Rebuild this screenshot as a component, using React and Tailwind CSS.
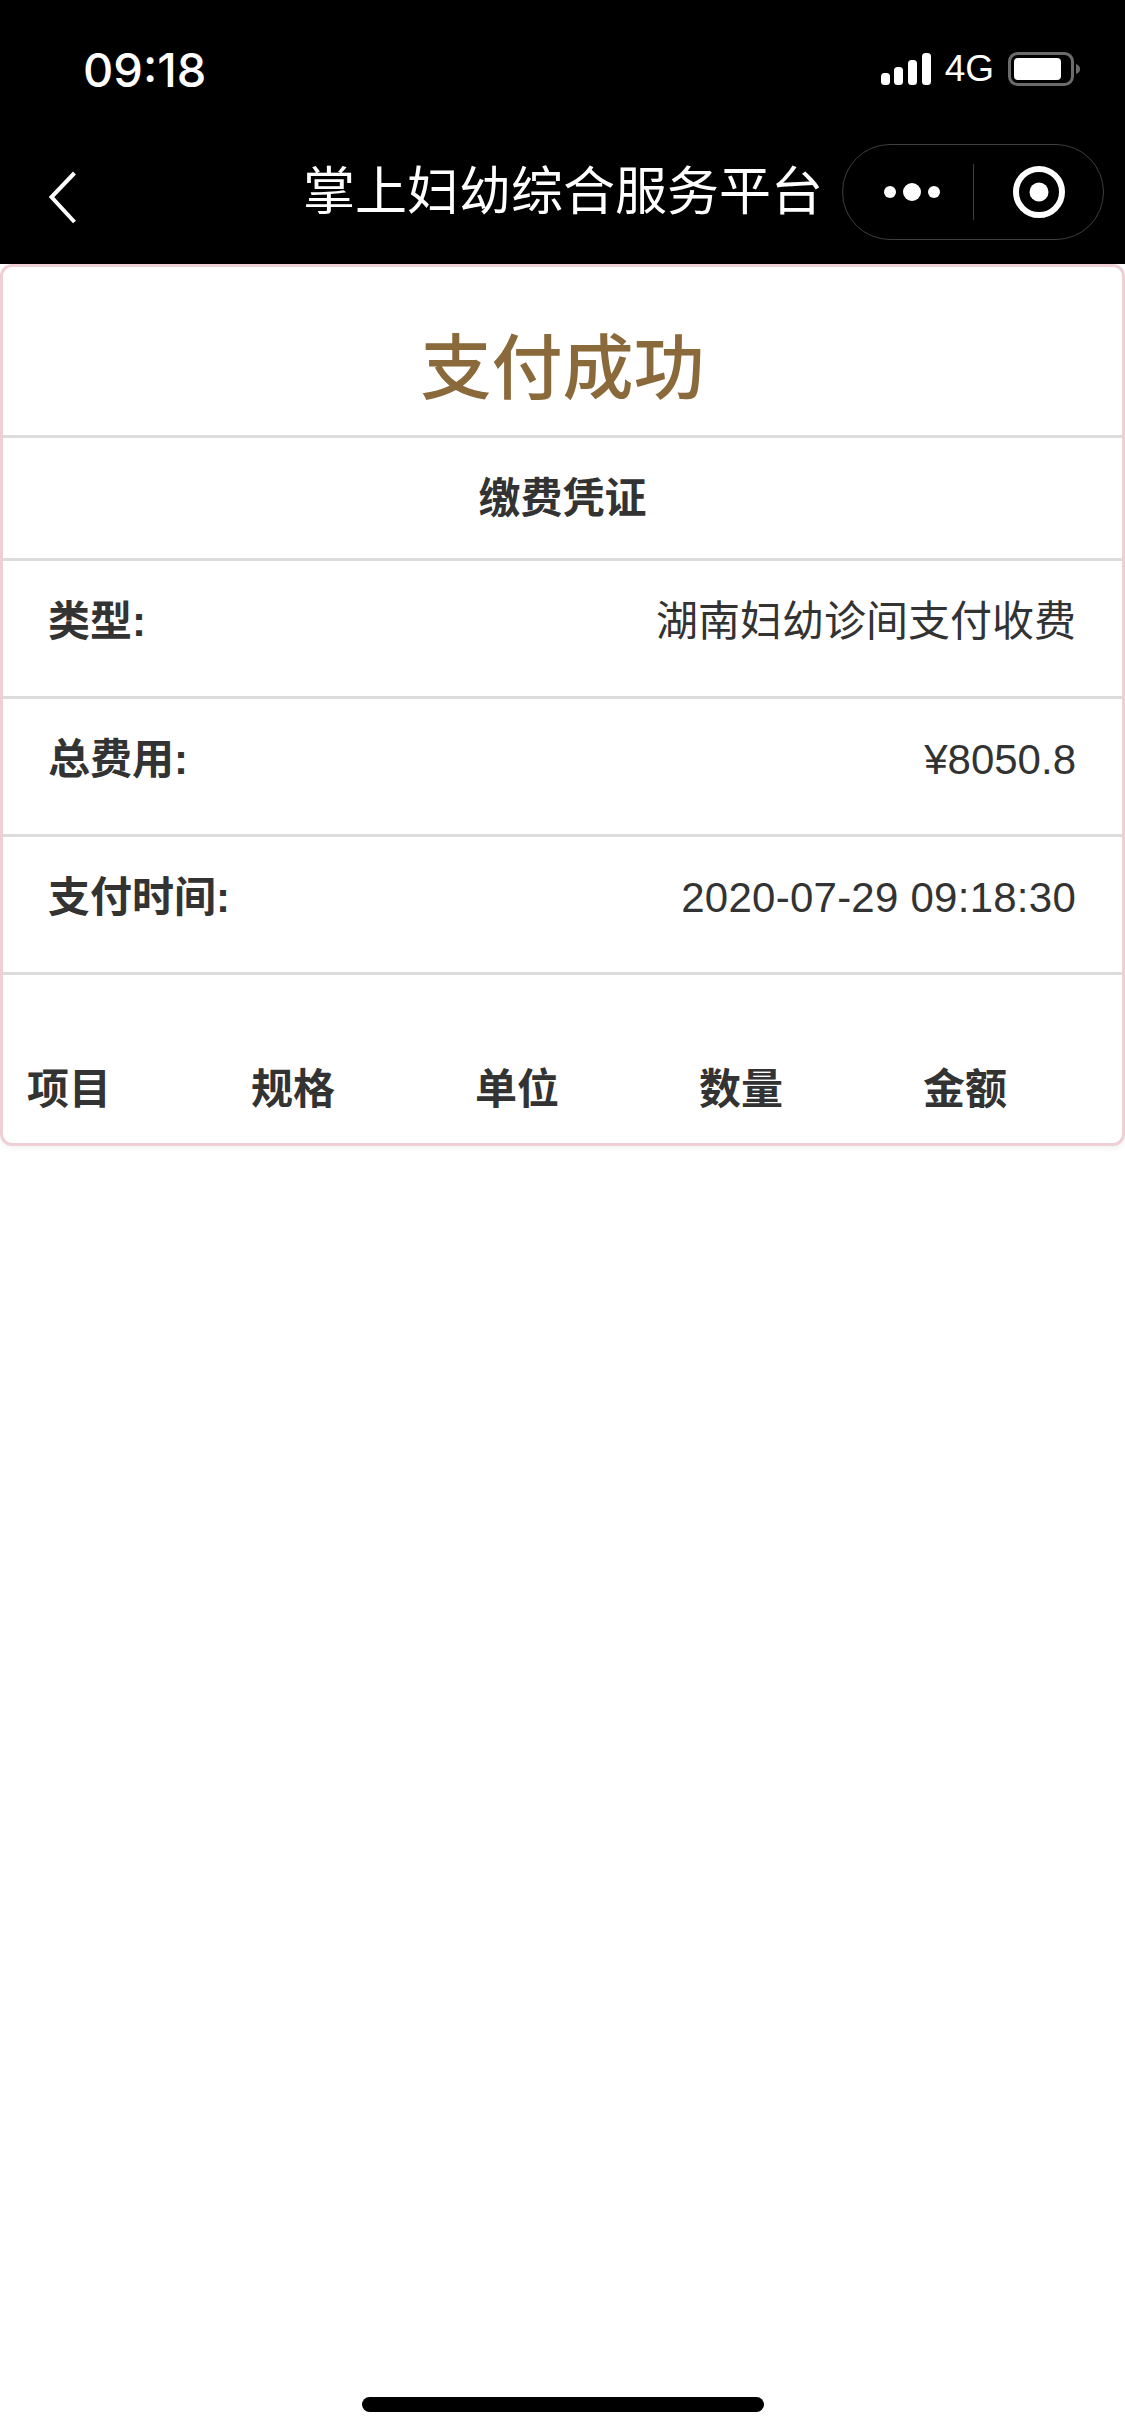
const cjk = "font-['Liberation_Sans','Noto_Sans_CJK_SC',sans-serif]";

const rows = [
  { label: "类型:", value: "湖南妇幼诊间支付收费" },
  { label: "总费用:", value: "¥8050.8" },
  { label: "支付时间:", value: "2020-07-29 09:18:30", wide: true },
];

const columns = ["项目", "规格", "单位", "数量", "金额"];

function StatusBar() {
  return (
    <div className="flex h-[132px] items-start justify-between pt-[43px] pr-[45px] pl-[83px]">
      <span className="font-['Inter',sans-serif] text-[47px] leading-[54px] font-medium text-white">09:18</span>
      <div className="flex items-center pt-[6px]">
        <svg width="52" height="33" viewBox="0 0 52 33" fill="#fff">
          <rect x="1" y="20" width="9" height="12" rx="3.5" />
          <rect x="14" y="14" width="9" height="18" rx="3.5" />
          <rect x="28" y="7" width="9" height="25" rx="3.5" />
          <rect x="42" y="0" width="9" height="32" rx="3.5" />
        </svg>
        <span className="ml-[13px] text-[37px] leading-[40px] text-white">4G</span>
        <svg className="ml-[14px]" width="72" height="34" viewBox="0 0 72 34">
          <rect x="1.5" y="1.5" width="63" height="31" rx="8" fill="none" stroke="#6b6b6b" strokeWidth="3" />
          <rect x="6" y="6" width="47" height="22" rx="4" fill="#fff" />
          <path d="M68 12c3 1 4 3 4 5s-1 4-4 5z" fill="#6b6b6b" />
        </svg>
      </div>
    </div>
  );
}

function NavBar() {
  return (
    <div className="relative flex h-[132px] items-start">
      <svg className="absolute top-[39px] left-[48px]" width="30" height="54" viewBox="0 0 30 54" fill="none">
        <path d="M26.5 2 3.5 26 26.5 51" stroke="#fff" strokeWidth="4" />
      </svg>
      <div className="mt-[27px] ml-[303px] text-[52px] leading-[66px] whitespace-nowrap text-white">掌上妇幼综合服务平台</div>
      <div className="absolute top-[12px] left-[842px] flex h-[96px] w-[262px] items-center rounded-full border border-[#3f3f3f]">
        <svg className="ml-[40px]" width="58" height="20" viewBox="0 0 58 20" fill="#fff">
          <circle cx="7" cy="10" r="6" />
          <circle cx="29" cy="10" r="9" />
          <circle cx="51" cy="10" r="6" />
        </svg>
        <div className="ml-[32px] h-[56px] w-px bg-[#3f3f3f]" />
        <svg className="ml-[39px]" width="52" height="52" viewBox="0 0 52 52">
          <circle cx="26" cy="26" r="23" fill="none" stroke="#fff" strokeWidth="6" />
          <circle cx="26" cy="26" r="9.5" fill="#fff" />
        </svg>
      </div>
    </div>
  );
}

export default function App() {
  return (
    <div className={`flex h-[2436px] w-[1125px] flex-col overflow-hidden bg-white ${cjk}`}>
      <div className="bg-black">
        <StatusBar />
        <NavBar />
      </div>
      <div className="rounded-[12px] border-[3px] border-[#eecfd5] shadow-[0_2px_6px_rgba(0,0,0,0.06)]">
        <div className="flex h-[171px] items-center justify-center border-b-[3px] border-[#dcdcdc] pt-[36px] text-[71px] font-medium text-[#8a6a3a]">
          支付成功
        </div>
        <div className="flex h-[123px] items-center justify-center border-b-[3px] border-[#dcdcdc] text-[42px] font-bold text-[#333]">
          缴费凭证
        </div>
        {rows.map((row) => (
          <div
            key={row.label}
            className="flex h-[138px] items-center justify-between border-b-[3px] border-[#dcdcdc] pr-[46px] pb-[14px] pl-[45px] text-[42px] text-[#333]"
          >
            <span className="font-bold">{row.label}</span>
            <span className={row.wide ? "tracking-[0.25px]" : ""}>{row.value}</span>
          </div>
        ))}
        <div className="grid h-[168px] grid-cols-[repeat(5,224px)] items-end pb-[23px] pl-[24px] text-[42px] leading-[60px] font-bold text-[#333]">
          {columns.map((col) => (
            <span key={col}>{col}</span>
          ))}
        </div>
      </div>
      <div className="flex flex-1 items-end justify-center pb-[24px]">
        <div className="h-[15px] w-[402px] rounded-full bg-black" />
      </div>
    </div>
  );
}
